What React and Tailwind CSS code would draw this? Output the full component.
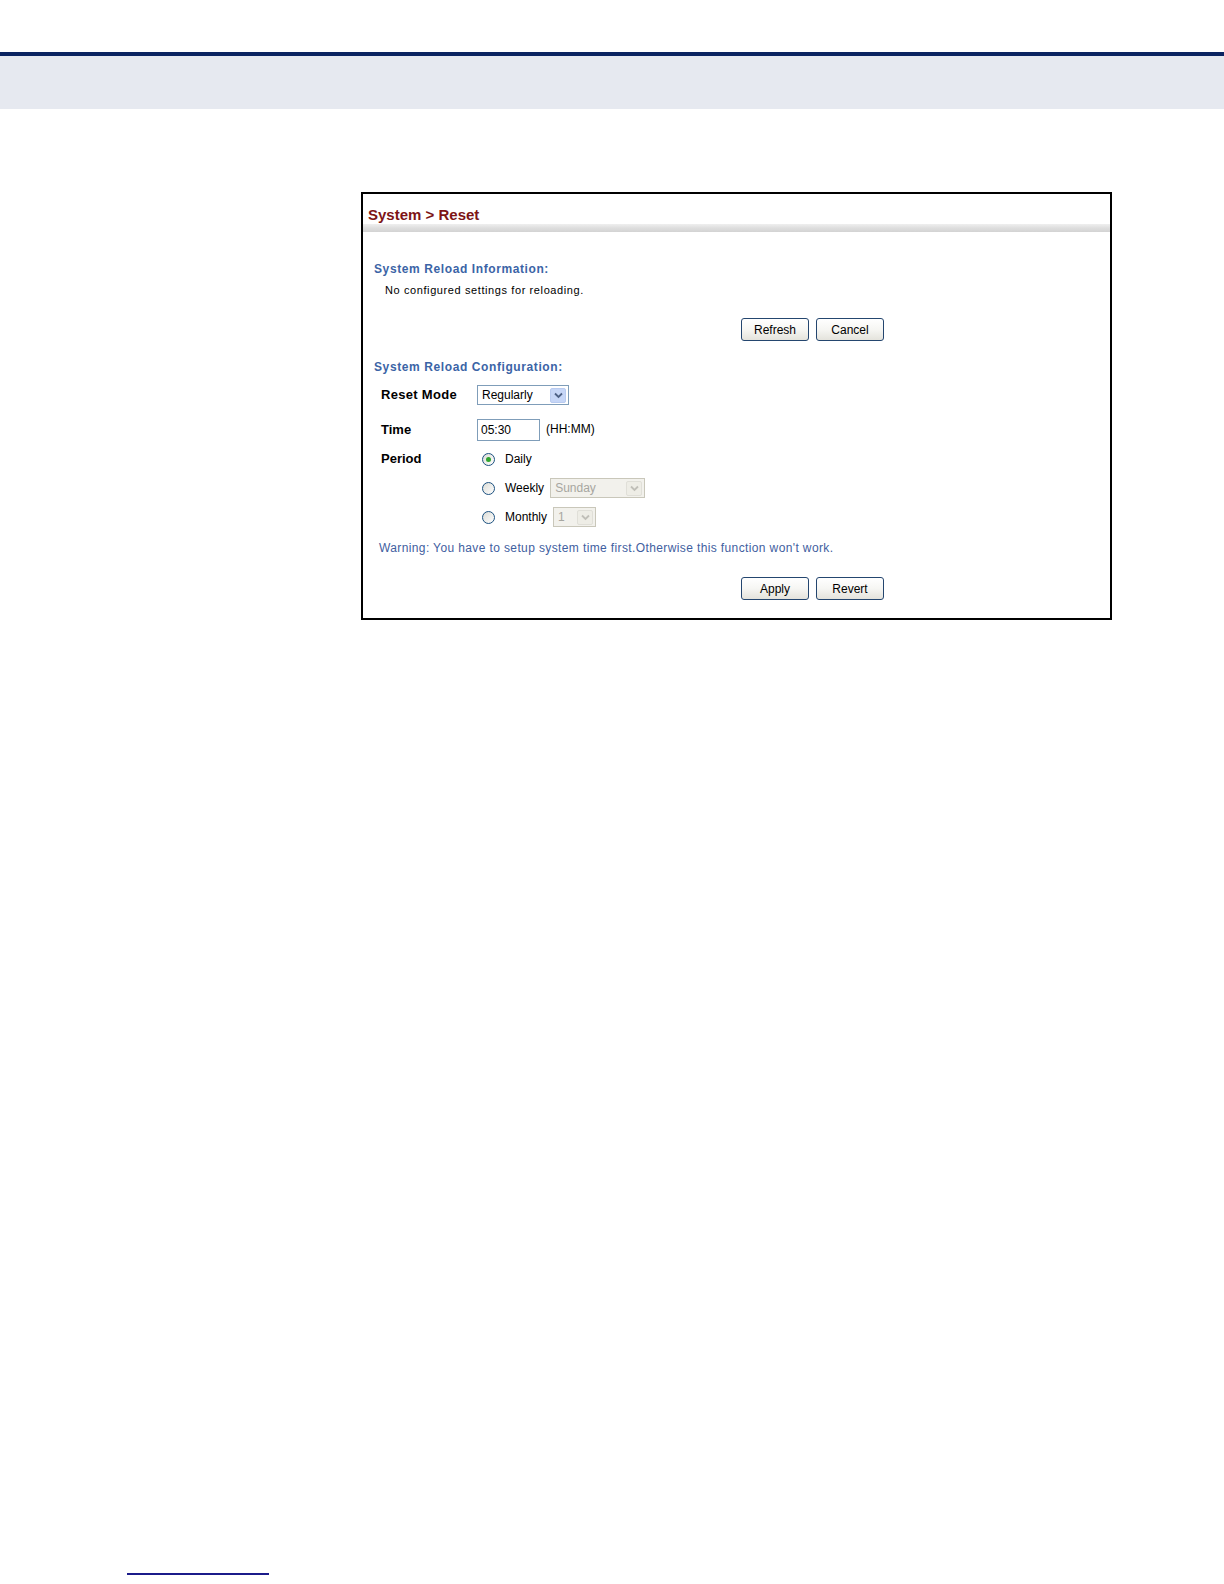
import React from "react";

const font = { fontFamily: '"Liberation Sans", Arial, sans-serif' };

const XpButton = ({ children }) => (
  <button className="h-[23px] w-[68px] rounded-[3px] border border-[#24466f] bg-linear-to-b from-[#ffffff] via-[#f6f6f3] to-[#e4e3dc] text-[12px] text-black leading-none">
    {children}
  </button>
);

const Chevron = ({ color }) => (
  <svg width="9" height="7" viewBox="0 0 9 7">
    <path d="M1 1.5 L4.5 5 L8 1.5" fill="none" stroke={color} strokeWidth="1.8" />
  </svg>
);

const Select = ({ value, width, disabled }) => (
  <div
    className={`flex h-[20px] items-center justify-between border pl-[4px] pr-[2px] font-normal ${
      disabled ? "border-[#c9c7ba] bg-[#f2f1ec]" : "border-[#7f9db9] bg-white"
    }`}
    style={{ width }}
  >
    <span className={`text-[12px] ${disabled ? "text-[#a7a6a0]" : "text-black"}`}>{value}</span>
    <span
      className={`flex h-[15px] w-[16px] items-center justify-center rounded-[2px] border ${
        disabled ? "border-[#e0dfd8] bg-[#eeede6]" : "border-[#b9cbf0] bg-[#c6d6f7]"
      }`}
    >
      <Chevron color={disabled ? "#c0bfb8" : "#4d6185"} />
    </span>
  </div>
);

const Radio = ({ checked }) => (
  <span className="flex h-[13px] w-[13px] items-center justify-center rounded-full border border-[#1c5180] bg-linear-to-br from-[#dcdcd6] to-[#ffffff]">
    {checked && <span className="h-[5px] w-[5px] rounded-full bg-[#2fa52f]" />}
  </span>
);

const PeriodOption = ({ label, checked, children }) => (
  <div className="flex h-[20px] items-center">
    <span className="ml-[5px] mr-[10px]">
      <Radio checked={checked} />
    </span>
    <span className="mr-[6px] text-[12px] text-black">{label}</span>
    {children}
  </div>
);

export default function App() {
  return (
    <div className="min-h-[1584px] w-[1224px] bg-white" style={font}>
      <div className="h-[52px]" />
      <div className="h-[4px] bg-[#0b2461]" />
      <div className="h-[53px] bg-[#e6e9f0]" />

      <div className="ml-[361px] mt-[83px] w-[751px] border-2 border-black bg-white">
        <div className="pl-[5px] pt-[12px] pb-[1px]">
          <h1 className="text-[15px] font-bold leading-[17px] text-[#7d1416]">System &gt; Reset</h1>
        </div>
        <div className="h-[8px] bg-linear-to-b from-[#efefef] via-[#dedede] to-[#d3d3d3]" />

        <div className="pl-[11px]">
          <h2 className="mt-[30px] text-[12px] font-bold leading-[15px] tracking-[0.6px] text-[#3b64a6]">
            System Reload Information:
          </h2>
          <p className="mt-[6px] pl-[11px] text-[11px] leading-[14px] tracking-[0.6px] text-black">
            No configured settings for reloading.
          </p>
        </div>

        <div className="mt-[21px] flex gap-[7px] pl-[378px]">
          <XpButton>Refresh</XpButton>
          <XpButton>Cancel</XpButton>
        </div>

        <h2 className="mt-[19px] pl-[11px] text-[12px] font-bold leading-[15px] tracking-[0.6px] text-[#3b64a6]">
          System Reload Configuration:
        </h2>

        <div className="mt-[10px] grid grid-cols-[96px_1fr] pl-[18px] text-[13px] font-bold text-black">
          <div className="flex h-[20px] items-center tracking-[0.3px]">Reset Mode</div>
          <div className="flex items-center">
            <Select value="Regularly" width="92px" />
          </div>

          <div className="mt-[14px] flex h-[22px] items-center">Time</div>
          <div className="mt-[14px] flex items-center gap-[6px] font-normal">
            <div className="flex h-[22px] w-[63px] items-center border border-[#7f9db9] pl-[3px] text-[12px]">05:30</div>
            <span className="-mt-[3px] text-[12px]">(HH:MM)</span>
          </div>

          <div className="mt-[8px] flex h-[20px] items-center">Period</div>
          <div className="mt-[8px] flex flex-col gap-[9px] font-normal">
            <PeriodOption label="Daily" checked />
            <PeriodOption label="Weekly">
              <Select value="Sunday" width="95px" disabled />
            </PeriodOption>
            <PeriodOption label="Monthly">
              <Select value="1" width="43px" disabled />
            </PeriodOption>
          </div>
        </div>

        <p className="mt-[14px] pl-[16px] text-[12px] leading-[15px] tracking-[0.38px] text-[#3f60a0]">
          Warning: You have to setup system time first.Otherwise this function won't work.
        </p>

        <div className="mt-[21px] mb-[18px] flex gap-[7px] pl-[378px]">
          <XpButton>Apply</XpButton>
          <XpButton>Revert</XpButton>
        </div>
      </div>

      <div className="ml-[127px] mt-[953px] h-[2px] w-[142px] bg-[#1b1b8a]" />
    </div>
  );
}
